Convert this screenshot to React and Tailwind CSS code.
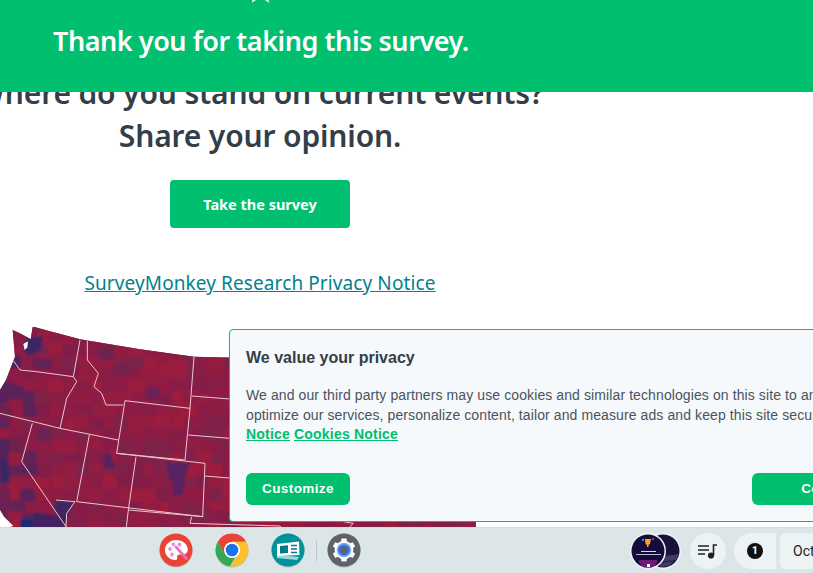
import React from "react";

const clipD =
  "M100 20 L240 58 L420 88 L582 110 L1428 130 L1428 630 L0 630 L0 560 L12 590 L0 600 L0 210 L18 180 L45 110 L38 30 L70 45 L92 58 L98 22 Z";

function hash(a, b) {
  const s = Math.sin(a * 12.9898 + b * 78.233) * 43758.5453;
  return s - Math.floor(s);
}

const palette = ["#8c1c44", "#901b42", "#871e46", "#821f48", "#941a40", "#7e2049", "#8a1d45", "#9c1a3e"];
const blues = ["#5a2159", "#632056", "#6b2052", "#52225c", "#702050"];

const cells = [];
for (let x = -10; x < 1440; x += 40) {
  for (let y = 0; y < 630; y += 36) {
    const ox = Math.floor(hash(x, y) * 18) - 9;
    const oy = Math.floor(hash(y, x) * 14) - 7;
    const coast = 1 - Math.min(1, (x + (630 - y) * 0.1 - 10) / 150);
    const r = hash(x + 3, y + 7);
    const c = r < coast * 0.85 ? blues[Math.floor(hash(x, y + 1) * 5)] : palette[Math.floor(hash(x + 1, y) * 8)];
    cells.push(<rect key={x + "-" + y} x={x + ox} y={y + oy} width="46" height="42" fill={c} />);
  }
}

const blobs = [
  ["M78 52 L130 48 L122 92 L85 108 L72 90Z", "#3d2565"],
  ["M100 110 L160 120 L150 150 L100 145Z", "#652055"],
  ["M290 80 L340 75 L345 115 L300 125Z", "#6f204f"],
  ["M340 135 L400 130 L395 165 L345 170Z", "#74204d"],
  ["M440 205 L478 198 L475 232 L440 235Z", "#66205a"],
  ["M500 425 L570 430 L555 470 L550 525 L520 525 L520 490 L505 470Z", "#562260"],
  ["M312 400 L332 400 L345 445 L312 445Z", "#552260"],
  ["M170 540 L225 545 L205 580 L195 620 L160 570Z", "#3f2560"],
  ["M60 598 L98 596 L100 630 L62 630Z", "#1c2a70"],
  ["M0 420 L25 425 L30 485 L0 490Z", "#3a2564"],
  ["M100 575 L190 590 L195 630 L100 630Z", "#422460"],
  ["M0 180 L70 200 L90 235 L20 240 L0 228Z", "#5a2259"],
  ["M480 130 L560 120 L560 180 L470 170Z", "#9c1a3d"],
];

const lines = [
  "M35 115 L60 150 L110 155 L220 170",
  "M240 60 L220 170 L230 185 L200 235 L180 325",
  "M262 60 L262 120 L295 160 L282 200 L305 220 L318 255 L370 255",
  "M0 280 L180 325 L355 360",
  "M97 310 L65 425 L198 620",
  "M268 345 L230 545",
  "M168 540 L225 545 L200 580 L198 625",
  "M375 242 L570 265 L555 420 L350 400 Z",
  "M582 110 L570 265",
  "M575 228 L690 237",
  "M565 345 L690 355",
  "M408 410 L385 570 L378 630",
  "M350 400 L615 430 L608 590 L230 545",
  "M615 468 L700 475",
  "M385 570 L610 590",
  "M575 590 L570 610 L840 618 L850 630",
  "M1000 600 L1060 610 L1040 630",
];

function UsMap() {
  return (
    <svg width="480" height="207" viewBox="0 0 1440 621" className="block mt-[24px] shrink-0">
      <defs>
        <clipPath id="us"><path d={clipD} /></clipPath>
        <filter id="soft"><feGaussianBlur stdDeviation="2.4" /></filter>
      </defs>
      <g clipPath="url(#us)">
        <rect width="1440" height="630" fill="#8a1c44" />
        <g filter="url(#soft)">
          {cells}
          {blobs.map(([d, f], i) => <path key={i} d={d} fill={f} />)}
        </g>
        <path d="M70 72 L84 64 L82 82 L74 90Z" fill="#fff" />
        {lines.map((d) => <path key={d} d={d} fill="none" stroke="#eec6cd" strokeWidth="3" />)}
      </g>
      <path d="M0 570 L12 590 L40 618 L0 630Z" fill="#fff" />
    </svg>
  );
}

function Palette() {
  return (
    <svg width="34" height="36" viewBox="0 0 34 36">
      <circle cx="17" cy="18" r="16.5" fill="#b9c1c3" />
      <circle cx="17" cy="17" r="16.5" fill="#ea4335" />
      <path d="M17 7c-6 0-11 4.4-11 10s4.6 10 10 10c2 0 2.6-1.2 2.2-2.6-.5-1.6.6-3 2.3-3H24c3 0 4.8-2 4.8-4.6C28.8 11 23.5 7 17 7z" fill="#fff" />
      <circle cx="11" cy="16" r="1.9" fill="#f28fd0" />
      <circle cx="14.5" cy="11.5" r="1.9" fill="#f28fd0" />
      <circle cx="20.5" cy="11.5" r="1.9" fill="#f28fd0" />
      <circle cx="13" cy="21.5" r="1.9" fill="#f28fd0" />
      <path d="M17 14 L27.5 25.5" stroke="#f06acb" strokeWidth="2.6" strokeLinecap="round" />
    </svg>
  );
}

function Chrome() {
  return (
    <svg width="34" height="36" viewBox="0 0 34 36">
      <circle cx="17" cy="18" r="16.5" fill="#b9c1c3" />
      <path d="M31.3 8.75 A16.5 16.5 0 0 0 2.7 8.75 L9.8 21 L17 8.75Z" fill="#ea4335" />
      <path d="M2.7 8.75 A16.5 16.5 0 0 0 14.9 33.36 L21.9 21 L9.8 21 Z" fill="#34a853" />
      <path d="M31.3 8.75 L17 8.75 L24 21 L14.9 33.36 A16.5 16.5 0 0 0 31.3 8.75Z" fill="#fbc02d" />
      <circle cx="17" cy="17" r="8" fill="#fff" />
      <circle cx="17" cy="17" r="6.3" fill="#1a73e8" />
    </svg>
  );
}

function Cards() {
  return (
    <svg width="34" height="36" viewBox="0 0 34 36">
      <circle cx="17" cy="18" r="16.5" fill="#b9c1c3" />
      <circle cx="17" cy="17" r="16.5" fill="#00929a" />
      <path d="M6 14 L6 25 L26 27 L28 24 L8 22Z" fill="#9fd8dc" />
      <path d="M6 11 L28 8.5 L28.5 22 L6 23Z" fill="#fff" />
      <path d="M9 13 L17 12.2 L17 20 L9 20.5Z" fill="#00798a" />
      <path d="M20 12.5 H26 M20 16 H26 M20 19.5 H26" stroke="#00798a" strokeWidth="1.5" />
    </svg>
  );
}

function Gear() {
  return (
    <svg width="34" height="36" viewBox="0 0 34 36">
      <circle cx="17" cy="18" r="16.5" fill="#aab2b4" />
      <circle cx="17" cy="17" r="16.5" fill="#5f6368" />
      <g fill="#fff">
        {[0, 60, 120, 180, 240, 300].map((a) => (
          <rect key={a} x="14.3" y="5.5" width="5.4" height="6" rx="1" transform={`rotate(${a} 17 17)`} />
        ))}
      </g>
      <circle cx="17" cy="17" r="9.3" fill="#fff" />
      <circle cx="17" cy="17" r="7.3" fill="#7fa8f5" />
      <circle cx="17" cy="17" r="5.6" fill="#2f6fe0" />
      <circle cx="17" cy="17" r="3.3" fill="#5f6368" />
    </svg>
  );
}

function Avatars() {
  return (
    <svg width="52" height="36" viewBox="0 0 52 36">
      <circle cx="33" cy="18" r="18" fill="#f1f5f6" />
      <circle cx="33" cy="18" r="16.5" fill="#171238" />
      <path d="M30 24 L49 21 L46 27 L30 29Z" fill="#3f3e60" />
      <path d="M30 30 L44 28 L39 33 L30 34Z" fill="#3f3e60" />
      <circle cx="18" cy="18" r="18" fill="#f1f5f6" />
      <circle cx="18" cy="18" r="16.5" fill="#140c3d" />
      <path d="M9 27 L27 27 L27 30 L22 34.5 L14 34.5 L9 30Z" fill="#6d1a78" />
      <path d="M15 6 L21 6 L20 11 L18.5 12 L18.5 14 L17 14 L17 12 L15.5 11Z" fill="#f5a623" />
      <circle cx="13" cy="7" r="1" fill="#3fb6e8" />
      <circle cx="23" cy="6" r="1" fill="#e8487f" />
      <rect x="11" y="18" width="15" height="1" fill="#d8d8ea" />
      <rect x="6" y="21" width="25" height="1" fill="#b9b9d2" />
      <rect x="17" y="31" width="3" height="3" fill="#fff" />
    </svg>
  );
}

export default function App() {
  return (
    <div className="relative w-[813px] h-[573px] overflow-hidden flex flex-col bg-white font-['Liberation_Sans',sans-serif]">
      <main className="relative flex-1 min-h-0 overflow-hidden">
        <div className="w-[520px] flex flex-col items-center pt-[71px]">
          <h1 className="whitespace-nowrap text-center font-['Noto_Sans',sans-serif] font-semibold text-[30px] leading-[43px] tracking-[-0.15px] text-[#333e48]">
            Where do you stand on current events?
            <br />
            Share your opinion.
          </h1>
          <button className="mt-[23px] w-[180px] h-12 pt-px rounded bg-[#00bf6f] text-white font-['Noto_Sans',sans-serif] font-bold text-[14.5px]">
            Take the survey
          </button>
          <a className="mt-[42px] text-[19px] leading-[26px] tracking-[0.1px] underline text-[#00828f] font-['Noto_Sans',sans-serif]">
            SurveyMonkey Research Privacy Notice
          </a>
          <div className="w-full">
            <UsMap />
          </div>
        </div>

        <div className="absolute top-0 left-0 right-0 h-[92px] bg-[#00bf6f] pl-[53px] pt-[22px]">
          <p className="font-['Noto_Sans',sans-serif] font-semibold text-[27px] leading-[38px] tracking-[-0.45px] text-white">
            Thank you for taking this survey.
          </p>
          <svg className="absolute left-[247px] top-[-24px]" width="27" height="27" viewBox="0 0 24 24" fill="none" stroke="#fff" strokeWidth="1.6">
            <path d="M12 2 L15 9 L22.5 9.5 L16.5 14.5 L18.5 22 L12 18 L5.5 22 L7.5 14.5 L1.5 9.5 L9 9 Z" />
          </svg>
        </div>

        <section className="absolute left-[229px] top-[329px] w-[700px] h-[193px] rounded-[4px] border border-[#00bf6f] bg-[#f5f9fc] px-4 pt-[18px] overflow-hidden">
          <h2 className="text-base leading-[20px] font-bold text-[#333e48]">We value your privacy</h2>
          <p className="mt-[17px] w-[800px] text-[14px] leading-[20px] text-[#4a535c] tracking-[0.1px] whitespace-nowrap">
            We and our third party partners may use cookies and similar technologies on this site to analyze
            <br />
            optimize our services, personalize content, tailor and measure ads and keep this site secure.
          </p>
          <p className="-mt-[1px] text-[14px] leading-[20px] font-bold tracking-[0.2px] text-[#00bf6f] underline">
            <span>Notice</span>
            <span className="inline-block w-1" />
            <span>Cookies Notice</span>
          </p>
          <div className="mt-[29px] flex justify-between">
            <button className="w-[104px] h-8 pt-px rounded-md bg-[#00bf6f] text-white font-bold text-[13.5px] tracking-[0.4px]">Customize</button>
            <button className="w-40 h-8 pt-px rounded-md bg-[#00bf6f] text-white font-bold text-[13.5px] tracking-[0.4px]">Continue</button>
          </div>
        </section>
      </main>

      <footer className="relative h-[46px] shrink-0 bg-[#dce5e7] border-t border-[#d3dcdf]">
        <div className="w-[880px] h-full flex items-center pl-[159px]">
          <div className="flex items-center gap-[22px]">
            <Palette />
            <div className="relative"><Chrome /><span className="absolute left-[10px] top-[41px] w-[14px] h-[3px] bg-[#1c1c1c]" /></div>
            <Cards />
          </div>
          <span className="ml-[11px] w-px h-5 bg-[#bcc5c8]" />
          <div className="relative ml-[10px]"><Gear /><span className="absolute left-[12px] top-[41px] w-[10px] h-[3px] bg-[#5f6b70]" /></div>
          <div className="ml-[269px] flex items-center">
            <Avatars />
            <div className="ml-[8px] w-9 h-9 rounded-full bg-[#edf2f4] flex items-center justify-center">
              <svg width="20" height="16" viewBox="0 0 20 16" fill="none" stroke="#1f2224" strokeWidth="1.6">
                <path d="M0 3 H11 M0 7 H11 M0 11 H7" />
                <path d="M15.5 12 V2 H19" />
                <circle cx="13" cy="12.5" r="2.3" fill="#1f2224" />
              </svg>
            </div>
            <div className="ml-[8px] w-[42px] h-9 rounded-l-full rounded-r-md bg-[#edf2f4] flex items-center justify-center">
              <span className="w-4 h-4 rounded-full bg-[#111] text-white text-[11px] leading-4 text-center font-bold font-['Roboto',sans-serif]">1</span>
            </div>
            <div className="ml-1 w-[90px] h-9 rounded-md bg-[#edf2f4] pl-[13px] text-[14px] leading-9 text-[#1f2224] font-['Roboto',sans-serif]">Oct 5</div>
          </div>
        </div>
      </footer>
    </div>
  );
}
